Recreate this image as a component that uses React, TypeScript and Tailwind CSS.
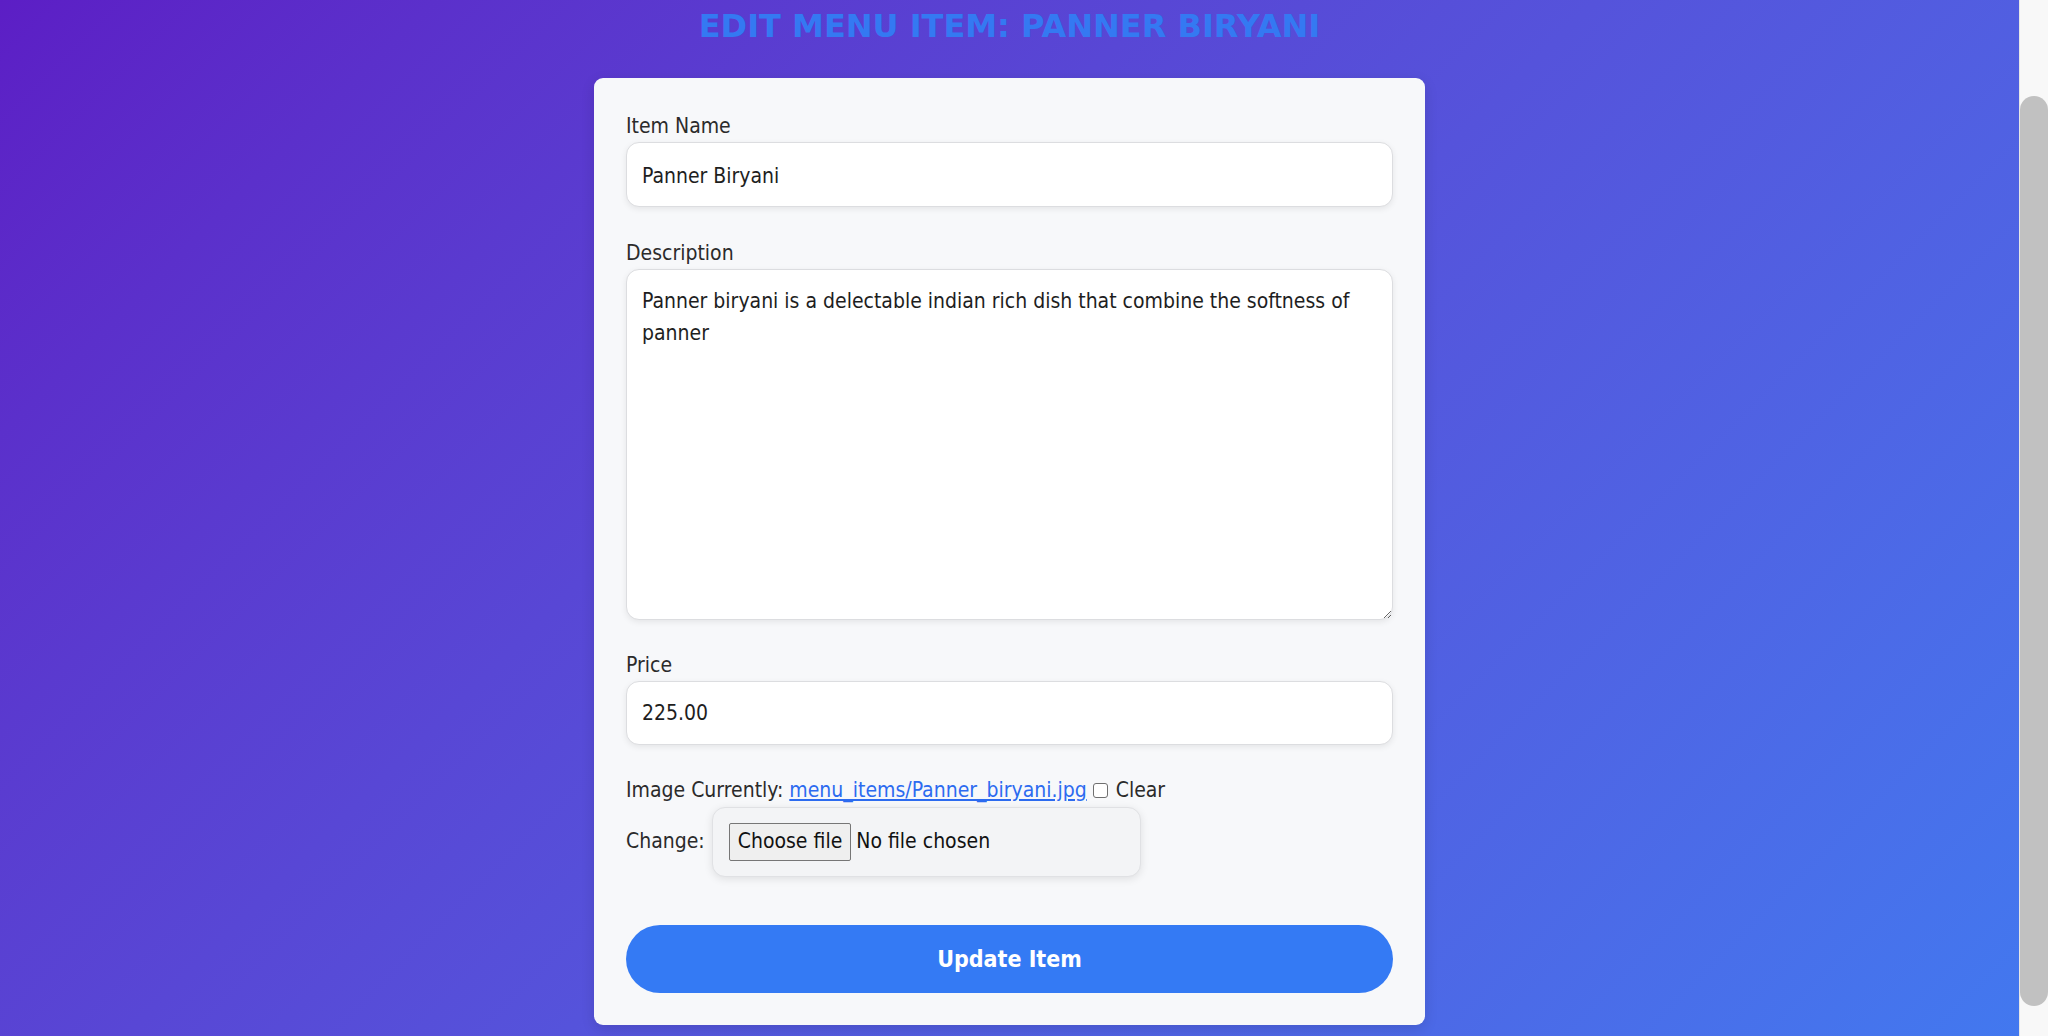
import React from "react";

const font = "font-['DejaVu_Sans_Condensed','DejaVu_Sans',sans-serif]";

function Label({ children }: { children: React.ReactNode }) {
  return (
    <label className="block h-[28px] leading-[32px] text-[21px] text-[#2b2b2b] mb-[4px]">
      {children}
    </label>
  );
}

const fieldBase =
  "block w-full rounded-[13px] border border-[#dcdde0] bg-white px-[15px] text-[21px] text-[#1e1e1e] shadow-[0_2px_6px_rgba(0,0,0,0.08)] outline-none";

export default function App() {
  return (
    <div className={`flex h-[1036px] w-full overflow-hidden ${font}`}>
      <main className="flex flex-1 flex-col items-center bg-linear-135 from-[#5c1ec5] to-[#4278ef]">
        <h1 className="mt-[6px] h-[40px] font-['DejaVu_Sans',sans-serif] text-[32px] leading-[40px] font-bold text-[#3479f2]">
          EDIT MENU ITEM: PANNER BIRYANI
        </h1>

        <form className="mt-[32px] w-[831px] rounded-[9px] bg-[#f7f8fa] px-[32px] pt-[32px] pb-[32px] shadow-[0_4px_14px_rgba(0,0,0,0.12)]">
          <div>
            <Label>Item Name</Label>
            <input
              defaultValue="Panner Biryani"
              className={`${fieldBase} h-[65px] pt-[2px]`}
            />
          </div>

          <div className="mt-[30px]">
            <Label>Description</Label>
            <textarea
              defaultValue="Panner biryani is a delectable indian rich dish that combine the softness of panner"
              className={`${fieldBase} h-[351px] py-[15px] leading-[32px]`}
            />
          </div>

          <div className="mt-[29px]">
            <Label>Price</Label>
            <input defaultValue="225.00" className={`${fieldBase} h-[64px]`} />
          </div>

          <div className="mt-[31px] flex h-[28px] items-center text-[21px] leading-[28px] text-[#2b2b2b]">
            <span>Image Currently:&nbsp;</span>
            <a href="#" className="text-[#2c6bf0] underline">
              menu_items/Panner_biryani.jpg
            </a>
            <span className="ml-[6px] mr-[8px] inline-block h-[15px] w-[15px] rounded-[3px] border border-[#6f6f6f] bg-white" />
            <span>Clear</span>
          </div>

          <div className="mt-[3px] flex items-center text-[21px] text-[#2b2b2b]">
            <span className="mr-[7px]">Change:</span>
            <div className="flex h-[70px] w-[429px] items-center rounded-[13px] border border-[#e0e1e4] bg-[#f3f4f6] px-[16px] shadow-[0_2px_8px_rgba(0,0,0,0.1)]">
              <span className="flex h-[38px] items-center rounded-[2px] border border-[#767676] bg-[#efefef] px-[8px] text-[#111]">
                Choose file
              </span>
              <span className="ml-[5px] text-[#111]">No file chosen</span>
            </div>
          </div>

          <button
            type="button"
            className="mt-[48px] flex h-[68px] w-full items-center justify-center rounded-full bg-[#347af4] text-[23px] font-bold text-white"
          >
            Update Item
          </button>
        </form>
      </main>

      <aside className="flex w-[29px] justify-center border-l border-[#e6e6e6] bg-[#f8f8f8] pt-[96px] pb-[30px]">
        <div className="w-[16px] flex-1 rounded-full bg-[#c1c1c1]" />
      </aside>
    </div>
  );
}
